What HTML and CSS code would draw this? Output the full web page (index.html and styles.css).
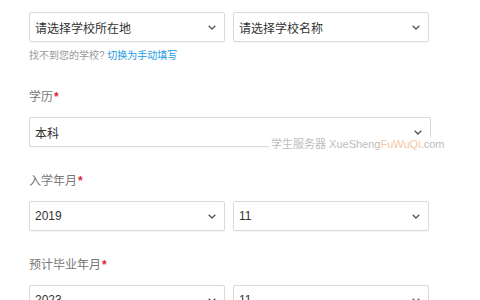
FILE: index.html
```html
<!DOCTYPE html>
<html lang="zh-CN">
<head>
    <meta charset="UTF-8">
    <meta name="viewport" content="width=device-width, initial-scale=1.0">
    <title>学校信息</title>
    <link rel="stylesheet" href="styles.css">
</head>
<body>
    <div class="form">
        <div class="field">
            <div class="row">
                <div class="select">
                    <span>请选择学校所在地</span>
                    <svg class="arrow" width="8" height="5" viewBox="0 0 8 5"><polyline points="0.7,0.7 4,4 7.3,0.7" /></svg>
                </div>
                <div class="select">
                    <span>请选择学校名称</span>
                    <svg class="arrow" width="8" height="5" viewBox="0 0 8 5"><polyline points="0.7,0.7 4,4 7.3,0.7" /></svg>
                </div>
            </div>
            <p class="hint">找不到您的学校? <a href="#" class="link">切换为手动填写</a></p>
        </div>

        <div class="field edu">
            <label>学历<span class="req">*</span></label>
            <div class="select">
                <span>本科</span>
                <svg class="arrow" width="8" height="5" viewBox="0 0 8 5"><polyline points="0.7,0.7 4,4 7.3,0.7" /></svg>
            </div>
            <div class="watermark">学生服务器 <span class="latin">XueSheng<em>FuWuQi</em>.com</span></div>
        </div>

        <div class="field">
            <label>入学年月<span class="req">*</span></label>
            <div class="row">
                <div class="select">
                    <span>2019</span>
                    <svg class="arrow" width="8" height="5" viewBox="0 0 8 5"><polyline points="0.7,0.7 4,4 7.3,0.7" /></svg>
                </div>
                <div class="select">
                    <span>11</span>
                    <svg class="arrow" width="8" height="5" viewBox="0 0 8 5"><polyline points="0.7,0.7 4,4 7.3,0.7" /></svg>
                </div>
            </div>
        </div>

        <div class="field">
            <label>预计毕业年月<span class="req">*</span></label>
            <div class="row">
                <div class="select">
                    <span>2023</span>
                    <svg class="arrow" width="8" height="5" viewBox="0 0 8 5"><polyline points="0.7,0.7 4,4 7.3,0.7" /></svg>
                </div>
                <div class="select">
                    <span>11</span>
                    <svg class="arrow" width="8" height="5" viewBox="0 0 8 5"><polyline points="0.7,0.7 4,4 7.3,0.7" /></svg>
                </div>
            </div>
        </div>
    </div>
</body>
</html>
```

FILE: styles.css
```css
body {
    margin: 0;
    background: #fff;
    font-family: 'Liberation Sans', 'Noto Sans CJK SC', sans-serif;
    color: #333;
}
.form {
    width: 402px;
    margin-left: 29px;
    padding-top: 12px;
    display: flex;
    flex-direction: column;
    gap: 26px;
}
.field {
    display: flex;
    flex-direction: column;
}
.edu {
    position: relative;
}
.row {
    display: grid;
    grid-template-columns: 196px 196px;
    gap: 8px;
}
.select {
    box-sizing: border-box;
    height: 30px;
    display: flex;
    align-items: center;
    justify-content: space-between;
    padding: 0 8px 0 5px;
    border: 1px solid #dadada;
    border-radius: 2px;
    box-shadow: 0 1px 1px rgba(0,0,0,0.04);
    font-size: 12px;
    color: #333;
}
.arrow {
    display: block;
}
.arrow polyline {
    fill: none;
    stroke: #555;
    stroke-width: 1.3;
}
.hint {
    margin: 7px 0 0;
    font-size: 10px;
    line-height: 14px;
    color: #999;
}
.link {
    color: #1b9be2;
    text-decoration: none;
}
label {
    font-size: 12px;
    line-height: 16px;
    color: #777;
    margin-bottom: 12px;
}
.req {
    color: #e3262f;
    font-weight: bold;
    margin-left: 1px;
}
.watermark {
    position: absolute;
    left: 240px;
    top: 48px;
    padding: 0 2px;
    height: 14px;
    line-height: 14px;
    background: rgba(255,255,255,0.92);
    font-size: 11px;
    color: #bdbdbd;
    white-space: nowrap;
}
.watermark .latin {
    font-size: 11px;
}
.watermark em {
    font-style: normal;
    color: #f5c7a3;
}
```
